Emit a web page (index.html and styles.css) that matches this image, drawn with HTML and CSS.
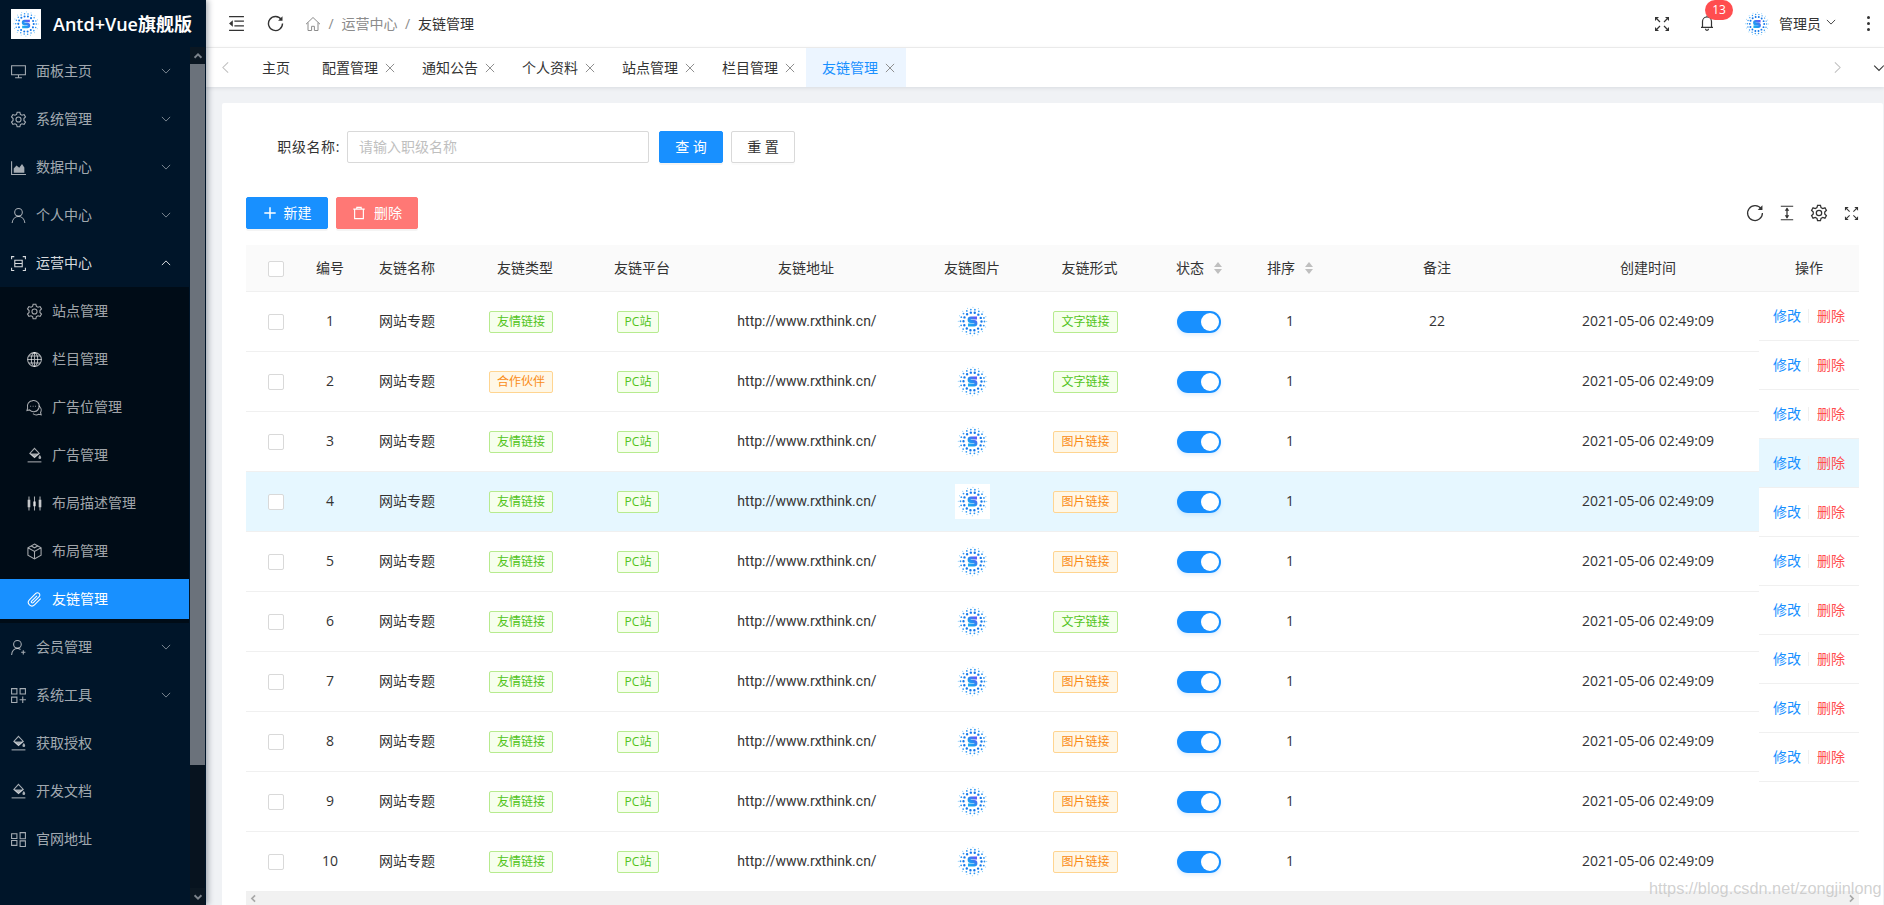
FILE: index.html
```html
<!DOCTYPE html>
<html lang="zh-CN">
<head>
<meta charset="utf-8">
<title>友链管理</title>
<link rel="stylesheet" href="styles.css">
</head>
<body>
<svg class="defs" aria-hidden="true">
  <defs>
    <linearGradient id="lg" gradientUnits="userSpaceOnUse" x1="-5" y1="5" x2="5" y2="-5">
      <stop offset="0" stop-color="#16b9ee"/>
      <stop offset=".5" stop-color="#2a8cf2"/>
      <stop offset="1" stop-color="#7a45f5"/>
    </linearGradient>
  </defs>
  <symbol id="logo" viewBox="-17.5 -17.5 35 35">
    <circle r="9" fill="none" stroke="#1377ea" stroke-width="2.400" stroke-linecap="round" stroke-dasharray="0 4.040"/>
    <circle r="12" fill="none" stroke="#2f96f2" stroke-width="1.800" stroke-linecap="round" stroke-dasharray="0 4.190"/>
    <circle r="14.200" fill="none" stroke="#7cc8f8" stroke-width="1.100" stroke-linecap="round" stroke-dasharray="0 5.580"/>
    <path d="M4.500 -3.400H-1.700a1.700 1.700 0 0 0 0 3.400H1.700a1.700 1.700 0 0 1 0 3.400H-4.500" fill="none" stroke="url(#lg)" stroke-width="3"/>
  </symbol>
  <symbol id="i-desktop" viewBox="0 0 16 16"><path d="M1.500 2.500h13v8.500h-13zM8 11v2.800M4.800 13.800h6.400"/></symbol>
  <symbol id="i-gear" viewBox="0 0 16 16"><path d="M6.700 1.200h2.600l.5 2 1.500.8 2-.6 1.300 2.200-1.500 1.500v1.800l1.500 1.500-1.300 2.200-2-.6-1.500.8-.5 2H6.700l-.5-2-1.500-.8-2 .6-1.300-2.200 1.500-1.500V7.100L1.400 5.600l1.300-2.200 2 .6 1.500-.8z"/><circle cx="8" cy="8" r="2.400"/></symbol>
  <symbol id="i-area" viewBox="0 0 16 16"><path d="M1.500 2v12.500H15"/><path class="solid" d="M3.500 13V9l2.600-3 2.600 2.200 2.600-3.400 2.200 3.200V13z"/></symbol>
  <symbol id="i-user" viewBox="0 0 16 16"><circle cx="8" cy="5" r="3.600"/><path d="M2 15c.4-3.600 2.900-6 6-6s5.600 2.400 6 6"/></symbol>
  <symbol id="i-scan" viewBox="0 0 16 16"><path d="M1.500 4V1.500H4M12 1.500h2.500V4M14.500 12v2.500H12M4 14.500H1.500V12M4.500 5h7v6h-7zM4.500 8h7"/></symbol>
  <symbol id="i-global" viewBox="0 0 16 16"><circle cx="8" cy="8" r="6.500"/><ellipse cx="8" cy="8" rx="3" ry="6.500"/><path d="M8 1.500v13M1.500 8h13M2.500 4.700h11M2.500 11.300h11"/></symbol>
  <symbol id="i-comment" viewBox="0 0 16 16"><path d="M6.500 1.500a5.300 5.300 0 0 0-5 7l-.6 2.300 2.400-.5a5.300 5.300 0 1 0 2.700-8.800z"/><path d="M11.800 6.200a5 5 0 0 1 1.900 6.600l.6 2-2.300-.4a5 5 0 0 1-5.500-.6"/><path d="M4 6.800h.8M6.300 6.800h.8M8.600 6.800h.8"/></symbol>
  <symbol id="i-bucket" viewBox="0 0 16 16"><path d="M8 1.200 12.500 6 8 10 3.600 6z"/><path class="solid" d="M3.600 6h8.900L8 10z"/><path class="solid" d="M13 7.500c.9 1.200 1.300 1.900 1.300 2.500a1.300 1.300 0 0 1-2.600 0c0-.6.400-1.300 1.300-2.500z"/><path d="M1.500 14h13"/></symbol>
  <symbol id="i-sliders" viewBox="0 0 16 16"><path d="M2.800 1.500v13M8 1.500v13M13.200 1.500v13"/><path class="solid" d="M1.500 4.500h2.600v7H1.500zM6.700 6h2.600v4.500H6.700zM11.900 4.500h2.600v7h-2.600z"/></symbol>
  <symbol id="i-cube" viewBox="0 0 16 16"><path d="M8 1l6.200 3.500v7L8 15l-6.200-3.500v-7zM1.800 4.500 8 8l6.200-3.500M8 8v7M5 2.800 8 4.500l3-1.700"/></symbol>
  <symbol id="i-clip" viewBox="0 0 16 16"><path d="M13.800 7.200 8 13a3.300 3.300 0 0 1-4.800-4.700l6-6a2.200 2.200 0 0 1 3.200 3.100L6.800 11a1 1 0 0 1-1.500-1.500l5-5"/></symbol>
  <symbol id="i-useradd" viewBox="0 0 16 16"><circle cx="7" cy="5" r="3.600"/><path d="M1.500 15c.4-3.600 2.700-6 5.500-6 1.100 0 2 .3 2.900.9M12.500 10.500v4M10.500 12.500h4"/></symbol>
  <symbol id="i-appadd" viewBox="0 0 16 16"><path d="M1.500 1.500h5v5h-5zM9.500 1.500h5v5h-5zM1.500 9.500h5v5h-5zM12 9v6M9 12h6"/></symbol>
  <symbol id="i-applike" viewBox="0 0 16 16"><path d="M1.500 2.500h5v4.500h-5zM1.500 9h5v4.500h-5zM9.500 1.500h5v5.800h-5zM9.500 9.300h5v5.200h-5z"/></symbol>
  <symbol id="i-down" viewBox="0 0 16 16"><path d="M2.500 5.200 8 10.800l5.500-5.600"/></symbol>
  <symbol id="i-up" viewBox="0 0 16 16"><path d="M2.500 10.800 8 5.200l5.500 5.600"/></symbol>
  <symbol id="i-left" viewBox="0 0 16 16"><path d="M10.800 2.500 5.200 8l5.600 5.500"/></symbol>
  <symbol id="i-right" viewBox="0 0 16 16"><path d="M5.200 2.500 10.800 8l-5.600 5.500"/></symbol>
  <symbol id="i-close" viewBox="0 0 16 16"><path d="M2.500 2.500l11 11M13.500 2.500l-11 11"/></symbol>
  <symbol id="i-indent" viewBox="0 0 16 16"><path d="M1 1.500h14M6 5.800h9M6 10.200h9M1 14.500h14"/><path class="solid" d="M4.500 5v6L1 8z"/></symbol>
  <symbol id="i-reload" viewBox="0 0 16 16"><path d="M13.500 4.400A6.600 6.600 0 1 0 14.600 8"/><path class="solid" d="M14.600 1.200v4.200h-4.200z"/></symbol>
  <symbol id="i-home" viewBox="0 0 16 16"><path d="M1 8.200 8 1.500l7 6.700M3 6.500v8h3.600v-4.200h2.800v4.200H13v-8"/></symbol>
  <symbol id="i-full" viewBox="0 0 16 16"><path class="solid" d="M1 1h4L1 5zM15 1h-4l4 4zM1 15h4l-4-4zM15 15h-4l4-4z"/><path d="M3 3l3 3M13 3l-3 3M3 13l3-3M13 13l-3-3"/></symbol>
  <symbol id="i-bell" viewBox="0 0 16 16"><path d="M2 12.800h12M3.500 12.800V7a4.500 4.500 0 0 1 9 0v5.800M8 1v1.500M6.500 14.300a1.500 1.500 0 0 0 3 0"/></symbol>
  <symbol id="i-height" viewBox="0 0 16 16"><path d="M2.500 2h11M2.500 14h11M8 4v8"/><path class="solid" d="M8 3 10 6H6zM8 13 6 10h4z"/></symbol>
  <symbol id="i-plus" viewBox="0 0 16 16"><path d="M8 1.500v13M1.500 8h13"/></symbol>
  <symbol id="i-trash" viewBox="0 0 16 16"><path d="M1.500 3.500h13M5.500 3.500V1.500h5v2M3 3.500v11h10v-11"/></symbol>
</svg>

<div class="app">
  <aside class="sider">
    <div class="brand">
      <span class="brand-logo"><svg class="brand-img"><use href="#logo"/></svg></span>
      <span class="brand-name">Antd+Vue旗舰版</span>
    </div>
    <div class="sider-body">
      <nav class="menu">
        <a class="menu-item"><svg class="ic"><use href="#i-desktop"/></svg><span class="menu-text">面板主页</span><svg class="chev"><use href="#i-down"/></svg></a>
        <a class="menu-item"><svg class="ic"><use href="#i-gear"/></svg><span class="menu-text">系统管理</span><svg class="chev"><use href="#i-down"/></svg></a>
        <a class="menu-item"><svg class="ic"><use href="#i-area"/></svg><span class="menu-text">数据中心</span><svg class="chev"><use href="#i-down"/></svg></a>
        <a class="menu-item"><svg class="ic"><use href="#i-user"/></svg><span class="menu-text">个人中心</span><svg class="chev"><use href="#i-down"/></svg></a>
        <a class="menu-item is-open"><svg class="ic"><use href="#i-scan"/></svg><span class="menu-text">运营中心</span><svg class="chev"><use href="#i-up"/></svg></a>
        <div class="submenu">
          <a class="menu-item sub"><svg class="ic"><use href="#i-gear"/></svg><span class="menu-text">站点管理</span></a>
          <a class="menu-item sub"><svg class="ic"><use href="#i-global"/></svg><span class="menu-text">栏目管理</span></a>
          <a class="menu-item sub"><svg class="ic"><use href="#i-comment"/></svg><span class="menu-text">广告位管理</span></a>
          <a class="menu-item sub"><svg class="ic"><use href="#i-bucket"/></svg><span class="menu-text">广告管理</span></a>
          <a class="menu-item sub"><svg class="ic"><use href="#i-sliders"/></svg><span class="menu-text">布局描述管理</span></a>
          <a class="menu-item sub"><svg class="ic"><use href="#i-cube"/></svg><span class="menu-text">布局管理</span></a>
          <a class="menu-item sub is-active"><svg class="ic"><use href="#i-clip"/></svg><span class="menu-text">友链管理</span></a>
        </div>
        <a class="menu-item"><svg class="ic"><use href="#i-useradd"/></svg><span class="menu-text">会员管理</span><svg class="chev"><use href="#i-down"/></svg></a>
        <a class="menu-item"><svg class="ic"><use href="#i-appadd"/></svg><span class="menu-text">系统工具</span><svg class="chev"><use href="#i-down"/></svg></a>
        <a class="menu-item"><svg class="ic"><use href="#i-bucket"/></svg><span class="menu-text">获取授权</span></a>
        <a class="menu-item"><svg class="ic"><use href="#i-bucket"/></svg><span class="menu-text">开发文档</span></a>
        <a class="menu-item"><svg class="ic"><use href="#i-applike"/></svg><span class="menu-text">官网地址</span></a>
      </nav>
      <div class="vbar">
        <span class="vbar-btn"><svg class="vbar-arrow"><use href="#i-up"/></svg></span>
        <span class="vbar-thumb"></span>
        <span class="vbar-track"></span>
        <span class="vbar-btn"><svg class="vbar-arrow"><use href="#i-down"/></svg></span>
      </div>
    </div>
  </aside>

  <main class="main">
    <header class="topbar">
      <svg class="top-ic"><use href="#i-indent"/></svg>
      <svg class="top-ic second"><use href="#i-reload"/></svg>
      <div class="crumbs">
        <svg class="crumb-home"><use href="#i-home"/></svg>
        <span class="crumb-sep">/</span>
        <span class="crumb-link">运营中心</span>
        <span class="crumb-sep">/</span>
        <span class="crumb-cur">友链管理</span>
      </div>
      <div class="top-right">
        <svg class="top-full"><use href="#i-full"/></svg>
        <span class="bell"><svg class="bell-ic"><use href="#i-bell"/></svg><span class="badge">13</span></span>
        <svg class="avatar"><use href="#logo"/></svg>
        <span class="admin">管理员</span>
        <svg class="admin-chev"><use href="#i-down"/></svg>
        <span class="dots"><i></i><i></i><i></i></span>
      </div>
    </header>

    <div class="tabs">
      <svg class="tab-arrow"><use href="#i-left"/></svg>
      <div class="tab-list">
        <span class="tab home">主页</span>
        <span class="tab">配置管理<svg class="tab-x"><use href="#i-close"/></svg></span>
        <span class="tab">通知公告<svg class="tab-x"><use href="#i-close"/></svg></span>
        <span class="tab">个人资料<svg class="tab-x"><use href="#i-close"/></svg></span>
        <span class="tab">站点管理<svg class="tab-x"><use href="#i-close"/></svg></span>
        <span class="tab">栏目管理<svg class="tab-x"><use href="#i-close"/></svg></span>
        <span class="tab is-current">友链管理<svg class="tab-x"><use href="#i-close"/></svg></span>
      </div>
      <svg class="tab-arrow right"><use href="#i-right"/></svg>
      <svg class="tab-more"><use href="#i-down"/></svg>
    </div>

    <section class="content">
      <div class="card">
        <form class="search">
          <label class="search-label">职级名称:</label>
          <span class="search-input">请输入职级名称</span>
          <span class="btn primary first-btn">查 询</span>
          <span class="btn">重 置</span>
        </form>

        <div class="toolbar">
          <span class="btn primary wide"><svg class="btn-ic"><use href="#i-plus"/></svg>新建</span>
          <span class="btn danger wide"><svg class="btn-ic trash"><use href="#i-trash"/></svg>删除</span>
          <div class="tools">
            <svg class="tool"><use href="#i-reload"/></svg>
            <svg class="tool"><use href="#i-height"/></svg>
            <svg class="tool"><use href="#i-gear"/></svg>
            <svg class="tool small"><use href="#i-full"/></svg>
          </div>
        </div>

        <div class="table-wrap">
          <table class="table">
            <colgroup>
              <col class="c-check"><col class="c-no"><col class="c-name"><col class="c-type"><col class="c-plat"><col class="c-url"><col class="c-img"><col class="c-form"><col class="c-state"><col class="c-sort"><col class="c-note"><col class="c-time"><col class="c-op">
            </colgroup>
            <thead>
              <tr>
                <th><span class="check"></span></th><th>编号</th><th class="left">友链名称</th><th>友链类型</th><th>友链平台</th><th>友链地址</th><th>友链图片</th><th>友链形式</th>
                <th>状态<span class="sorter"></span></th><th>排序<span class="sorter"></span></th><th>备注</th><th>创建时间</th><th></th>
              </tr>
            </thead>
            <tbody>
              <tr><td><span class="check"></span></td><td>1</td><td class="left">网站专题</td><td><span class="tag green">友情链接</span></td><td><span class="tag green">PC站</span></td><td class="url">http://www.rxthink.cn/</td><td><svg class="thumb"><use href="#logo"/></svg></td><td><span class="tag green">文字链接</span></td><td><span class="switch"></span></td><td>1</td><td>22</td><td>2021-05-06 02:49:09</td><td></td></tr>
              <tr><td><span class="check"></span></td><td>2</td><td class="left">网站专题</td><td><span class="tag orange">合作伙伴</span></td><td><span class="tag green">PC站</span></td><td class="url">http://www.rxthink.cn/</td><td><svg class="thumb"><use href="#logo"/></svg></td><td><span class="tag green">文字链接</span></td><td><span class="switch"></span></td><td>1</td><td></td><td>2021-05-06 02:49:09</td><td></td></tr>
              <tr><td><span class="check"></span></td><td>3</td><td class="left">网站专题</td><td><span class="tag green">友情链接</span></td><td><span class="tag green">PC站</span></td><td class="url">http://www.rxthink.cn/</td><td><svg class="thumb"><use href="#logo"/></svg></td><td><span class="tag orange">图片链接</span></td><td><span class="switch"></span></td><td>1</td><td></td><td>2021-05-06 02:49:09</td><td></td></tr>
              <tr class="is-hover"><td><span class="check"></span></td><td>4</td><td class="left">网站专题</td><td><span class="tag green">友情链接</span></td><td><span class="tag green">PC站</span></td><td class="url">http://www.rxthink.cn/</td><td><svg class="thumb"><use href="#logo"/></svg></td><td><span class="tag orange">图片链接</span></td><td><span class="switch"></span></td><td>1</td><td></td><td>2021-05-06 02:49:09</td><td></td></tr>
              <tr><td><span class="check"></span></td><td>5</td><td class="left">网站专题</td><td><span class="tag green">友情链接</span></td><td><span class="tag green">PC站</span></td><td class="url">http://www.rxthink.cn/</td><td><svg class="thumb"><use href="#logo"/></svg></td><td><span class="tag orange">图片链接</span></td><td><span class="switch"></span></td><td>1</td><td></td><td>2021-05-06 02:49:09</td><td></td></tr>
              <tr><td><span class="check"></span></td><td>6</td><td class="left">网站专题</td><td><span class="tag green">友情链接</span></td><td><span class="tag green">PC站</span></td><td class="url">http://www.rxthink.cn/</td><td><svg class="thumb"><use href="#logo"/></svg></td><td><span class="tag green">文字链接</span></td><td><span class="switch"></span></td><td>1</td><td></td><td>2021-05-06 02:49:09</td><td></td></tr>
              <tr><td><span class="check"></span></td><td>7</td><td class="left">网站专题</td><td><span class="tag green">友情链接</span></td><td><span class="tag green">PC站</span></td><td class="url">http://www.rxthink.cn/</td><td><svg class="thumb"><use href="#logo"/></svg></td><td><span class="tag orange">图片链接</span></td><td><span class="switch"></span></td><td>1</td><td></td><td>2021-05-06 02:49:09</td><td></td></tr>
              <tr><td><span class="check"></span></td><td>8</td><td class="left">网站专题</td><td><span class="tag green">友情链接</span></td><td><span class="tag green">PC站</span></td><td class="url">http://www.rxthink.cn/</td><td><svg class="thumb"><use href="#logo"/></svg></td><td><span class="tag orange">图片链接</span></td><td><span class="switch"></span></td><td>1</td><td></td><td>2021-05-06 02:49:09</td><td></td></tr>
              <tr><td><span class="check"></span></td><td>9</td><td class="left">网站专题</td><td><span class="tag green">友情链接</span></td><td><span class="tag green">PC站</span></td><td class="url">http://www.rxthink.cn/</td><td><svg class="thumb"><use href="#logo"/></svg></td><td><span class="tag orange">图片链接</span></td><td><span class="switch"></span></td><td>1</td><td></td><td>2021-05-06 02:49:09</td><td></td></tr>
              <tr><td><span class="check"></span></td><td>10</td><td class="left">网站专题</td><td><span class="tag green">友情链接</span></td><td><span class="tag green">PC站</span></td><td class="url">http://www.rxthink.cn/</td><td><svg class="thumb"><use href="#logo"/></svg></td><td><span class="tag orange">图片链接</span></td><td><span class="switch"></span></td><td>1</td><td></td><td>2021-05-06 02:49:09</td><td></td></tr>
            </tbody>
          </table>

          <div class="fixed-col">
            <div class="fixed-head">操作</div>
            <div class="fixed-row"><a class="op-edit">修改</a><i class="op-sep"></i><a class="op-del">删除</a></div>
            <div class="fixed-row"><a class="op-edit">修改</a><i class="op-sep"></i><a class="op-del">删除</a></div>
            <div class="fixed-row"><a class="op-edit">修改</a><i class="op-sep"></i><a class="op-del">删除</a></div>
            <div class="fixed-row is-hover"><a class="op-edit">修改</a><i class="op-sep"></i><a class="op-del">删除</a></div>
            <div class="fixed-row"><a class="op-edit">修改</a><i class="op-sep"></i><a class="op-del">删除</a></div>
            <div class="fixed-row"><a class="op-edit">修改</a><i class="op-sep"></i><a class="op-del">删除</a></div>
            <div class="fixed-row"><a class="op-edit">修改</a><i class="op-sep"></i><a class="op-del">删除</a></div>
            <div class="fixed-row"><a class="op-edit">修改</a><i class="op-sep"></i><a class="op-del">删除</a></div>
            <div class="fixed-row"><a class="op-edit">修改</a><i class="op-sep"></i><a class="op-del">删除</a></div>
            <div class="fixed-row"><a class="op-edit">修改</a><i class="op-sep"></i><a class="op-del">删除</a></div>
          </div>
        </div>
        <div class="hbar">
          <svg class="hbar-arrow"><use href="#i-left"/></svg>
          <svg class="hbar-arrow"><use href="#i-right"/></svg>
        </div>
      </div>
    </section>
  </main>
</div>
<div class="watermark">https://blog.csdn.net/zongjinlong</div>
</body>
</html>
```

FILE: styles.css
```css
* { box-sizing: border-box; }
html, body { margin: 0; height: 905px; overflow: hidden; }
body {
  font-family: "Open Sans", "Noto Sans CJK SC", sans-serif;
  font-size: 14px;
  line-height: 22px;
  color: #333;
  background: #f0f2f5;
}
a { text-decoration: none; }
svg { fill: none; stroke: currentColor; stroke-width: 1.2; flex: none; display: block; }
.solid { fill: currentColor; stroke: none; }
.defs { position: absolute; width: 0; height: 0; }

.app { display: flex; height: 905px; }

/* sidebar */
.sider {
  width: 206px;
  flex: none;
  background: #001529;
  display: flex;
  flex-direction: column;
  box-shadow: 2px 0 6px rgba(0, 21, 41, .35);
  position: relative;
  z-index: 3;
}
.brand { height: 47px; display: flex; align-items: center; padding-left: 11px; flex: none; }
.brand-logo { width: 30px; height: 30px; background: #fff; display: block; }
.brand-img { width: 30px; height: 30px; stroke: none; }
.brand-name { margin-left: 12px; color: #fff; font-size: 18px; font-weight: 600; white-space: nowrap; }
.sider-body { flex: 1; display: flex; min-height: 0; }
.menu { width: 190px; flex: none; overflow: hidden; padding-right: 1px; display: flex; flex-direction: column; }
.menu-item {
  display: flex;
  align-items: center;
  flex: none;
  height: 40px;
  margin: 4px 0;
  padding-left: 10px;
  color: rgba(255, 255, 255, .65);
}
.menu-item .ic { width: 17px; height: 17px; stroke-width: 1; }
.menu-text { margin-left: 9px; white-space: nowrap; }
.chev { width: 12px; height: 12px; margin-left: auto; margin-right: 17px; stroke-width: 1.3; opacity: .75; }
.is-open { color: rgba(255, 255, 255, .85); }
.is-open .chev { opacity: 1; }
.submenu { background: #000c17; flex: none; display: flex; flex-direction: column; }
.menu-item.sub { padding-left: 26px; }
.menu-item.is-active { background: #1890ff; color: #fff; }
.vbar { width: 15px; flex: none; margin-right: 1px; display: flex; flex-direction: column; background: #07131f; color: #7d848c; }
.vbar-btn { height: 17px; flex: none; display: flex; align-items: center; justify-content: center; background: #0b1722; }
.vbar-arrow { width: 10px; height: 10px; stroke-width: 3; }
.vbar-thumb { height: 701px; flex: none; background: #6b727b; }
.vbar-track { flex: 1; }

/* main column */
.main { flex: 1; min-width: 0; display: flex; flex-direction: column; }
.topbar {
  height: 48px;
  flex: none;
  background: #fff;
  border-bottom: 1px solid #f0f0f0;
  display: flex;
  align-items: center;
  padding-left: 22px;
  color: #333;
}
.top-ic { width: 17px; height: 17px; }
.top-ic.second { margin-left: 22px; stroke-width: 1.3; }
.crumbs { display: flex; align-items: center; margin-left: 21px; color: #8c8c8c; }
.crumb-home { width: 16px; height: 16px; stroke-width: 1; }
.crumb-sep { margin: 0 8px 0 7.5px; width: 5px; text-align: center; }
.crumb-cur { color: #333; }
.top-right { margin-left: auto; display: flex; align-items: center; padding-right: 14px; }
.top-full { width: 16px; height: 16px; }
.bell { width: 34px; height: 47px; margin-left: 29px; position: relative; display: block; }
.bell-ic { width: 16px; height: 17px; position: absolute; left: 0; top: 14px; stroke-width: 1.2; }
.badge {
  position: absolute;
  left: 6px;
  top: 0;
  width: 28px;
  height: 20px;
  border-radius: 10px;
  background: #ff4d4f;
  color: #fff;
  font-size: 12px;
  line-height: 20px;
  text-align: center;
}
.avatar { width: 28px; height: 28px; stroke: none; margin-left: 10px; }
.admin { margin-left: 8px; }
.admin-chev { width: 12px; height: 12px; margin-left: 4px; stroke-width: 1.2; margin-top: -3px; margin-right: -1px; }
.dots { display: flex; flex-direction: column; gap: 3px; margin-left: 31px; }
.dots i { display: block; width: 3px; height: 3px; background: #333; border-radius: 50%; }

/* tabs */
.tabs {
  height: 39px;
  flex: none;
  background: #fff;
  display: flex;
  align-items: center;
  box-shadow: 0 1px 4px rgba(0, 21, 41, .1);
  position: relative;
  z-index: 2;
  padding-left: 12px;
}
.tab-arrow { width: 15px; height: 15px; color: #bfbfbf; stroke-width: 1.1; }
.tab-arrow.right { margin-left: auto; }
.tab-more { width: 14px; height: 14px; margin-left: 27px; margin-right: -2px; color: #333; }
.tab-list { display: flex; height: 39px; margin-left: 13px; }
.tab { width: 100px; padding-left: 16px; display: flex; align-items: center; color: #333; }
.tab.home { width: 60px; }
.tab-x { width: 12px; height: 12px; margin-left: 6px; color: #8c8c8c; stroke-width: 1.3; }
.is-current { background: #ecf5ff; color: #1890ff; }

/* card */
.content { flex: 1; min-height: 0; padding: 16px 1px 0 16px; overflow: hidden; }
.card { background: #fff; border-radius: 2px; padding: 28px 24px 0; height: 900px; }
.search { display: flex; align-items: center; margin: 0; }
.search-label { width: 94px; text-align: right; color: #333; letter-spacing: .6px; }
.search-input {
  width: 302px;
  height: 32px;
  margin-left: 7px;
  border: 1px solid #d9d9d9;
  border-radius: 2px;
  padding: 4px 11px;
  color: #bfbfbf;
}
.btn {
  width: 64px;
  height: 32px;
  border: 1px solid #d9d9d9;
  border-radius: 2px;
  background: #fff;
  color: #333;
  display: flex;
  align-items: center;
  justify-content: center;
  margin-left: 8px;
  box-shadow: 0 2px 0 rgba(0, 0, 0, .015);
  white-space: nowrap;
}
.first-btn { margin-left: 10px; }
.btn.primary { background: #1890ff; border-color: #1890ff; color: #fff; box-shadow: 0 2px 0 rgba(0, 0, 0, .045); }
.btn.danger { background: #ff7875; border-color: #ff7875; color: #fff; box-shadow: 0 2px 0 rgba(0, 0, 0, .045); }
.btn.wide { width: 82px; margin-left: 0; }
.btn.wide + .btn.wide { margin-left: 8px; }
.btn-ic { width: 14px; height: 14px; margin-right: 7px; stroke-width: 1.7; }
.btn-ic.trash { margin-right: 8px; stroke-width: 1.3; }
.toolbar { display: flex; align-items: center; margin-top: 34px; height: 32px; }
.tools { margin-left: auto; margin-right: -1px; display: flex; align-items: center; gap: 14px; }
.tool { width: 18px; height: 18px; color: #333; stroke-width: 1.1; }
.tool.small { width: 15px; height: 15px; margin: 0 1.5px; }

/* table */
.table-wrap { position: relative; margin-top: 16px; height: 647px; overflow: hidden; }
.table { width: 1613px; border-collapse: separate; border-spacing: 0; table-layout: fixed; }
.c-check { width: 60px; }
.c-no { width: 48px; }
.c-name { width: 108px; }
.c-type { width: 126px; }
.c-plat { width: 108px; }
.c-url { width: 220px; }
.c-img { width: 112px; }
.c-form { width: 123px; }
.c-state { width: 96px; }
.c-sort { width: 86px; }
.c-note { width: 208px; }
.c-time { width: 214px; }
.c-op { width: 104px; }
.table th {
  height: 47px;
  padding: 0;
  background: #fafafa;
  border-bottom: 1px solid #f0f0f0;
  font-weight: 400;
  text-align: center;
  color: #333;
}
.table td {
  height: 60px;
  padding: 0 0 2px;
  border-bottom: 1px solid #f0f0f0;
  text-align: center;
  color: #333;
  vertical-align: middle;
}
.table .left { text-align: left; padding-left: 25px; }
.table .url { font-family: Roboto, sans-serif; padding-left: 2px; }
.is-hover td, .fixed-row.is-hover { background: #e6f7ff; }
.check {
  display: inline-block;
  width: 16px;
  height: 16px;
  border: 1px solid #d9d9d9;
  border-radius: 2px;
  background: #fff;
  vertical-align: middle;
}
.sorter {
  display: inline-block;
  width: 8px;
  height: 12px;
  margin-left: 10px;
  vertical-align: -1px;
  position: relative;
}
.sorter::before, .sorter::after {
  content: "";
  position: absolute;
  left: 0;
  border-left: 4px solid transparent;
  border-right: 4px solid transparent;
}
.sorter::before { top: 0; border-bottom: 5px solid #bfbfbf; }
.sorter::after { bottom: 0; border-top: 5px solid #bfbfbf; }
.tag {
  display: inline-block;
  height: 22px;
  padding: 0 7px;
  margin: 2px 8px 0 0;
  border: 1px solid;
  border-radius: 2px;
  font-size: 12px;
  line-height: 20px;
  vertical-align: middle;
}
.green { color: #52c41a; background: #f6ffed; border-color: #b7eb8f; }
.orange { color: #fa8c16; background: #fff7e6; border-color: #ffd591; }
.thumb { width: 35px; height: 35px; background: #fff; margin: 2px auto 0; stroke: none; }
.switch {
  display: inline-block;
  width: 44px;
  height: 22px;
  margin-top: 2px;
  border-radius: 11px;
  background: #1890ff;
  position: relative;
  vertical-align: middle;
  box-shadow: 0 2px 4px rgba(24, 144, 255, .15);
}
.switch::after {
  content: "";
  position: absolute;
  right: 2px;
  top: 2px;
  width: 18px;
  height: 18px;
  border-radius: 50%;
  background: #fff;
}

/* fixed operation column */
.fixed-col { position: absolute; right: 0; top: 0; width: 100px; background: #fff; }
.fixed-head { height: 47px; background: #fafafa; border-bottom: 1px solid #f0f0f0; display: flex; align-items: center; justify-content: center; }
.fixed-row { height: 49px; border-bottom: 1px solid #f0f0f0; display: flex; align-items: center; justify-content: center; background: #fff; }
.op-edit { color: #1890ff; }
.op-del { color: #ff4d4f; }
.op-sep { display: block; width: 1px; height: 14px; margin: 0 8px 0 7px; background: #f0f0f0; }

.hbar { height: 13px; width: 1613px; background: #f1f1f1; display: flex; justify-content: space-between; align-items: center; padding: 0 3px; color: #a8a8a8; }
.hbar-arrow { width: 9px; height: 9px; stroke-width: 3; }

.watermark {
  position: absolute;
  left: 1649px;
  top: 878px;
  font-family: "Liberation Sans", sans-serif;
  font-size: 16.3px;
  line-height: 20px;
  color: rgba(170, 170, 170, .55);
  text-shadow: 0 0 1px rgba(255, 255, 255, .6);
  white-space: nowrap;
  z-index: 5;
}
```
